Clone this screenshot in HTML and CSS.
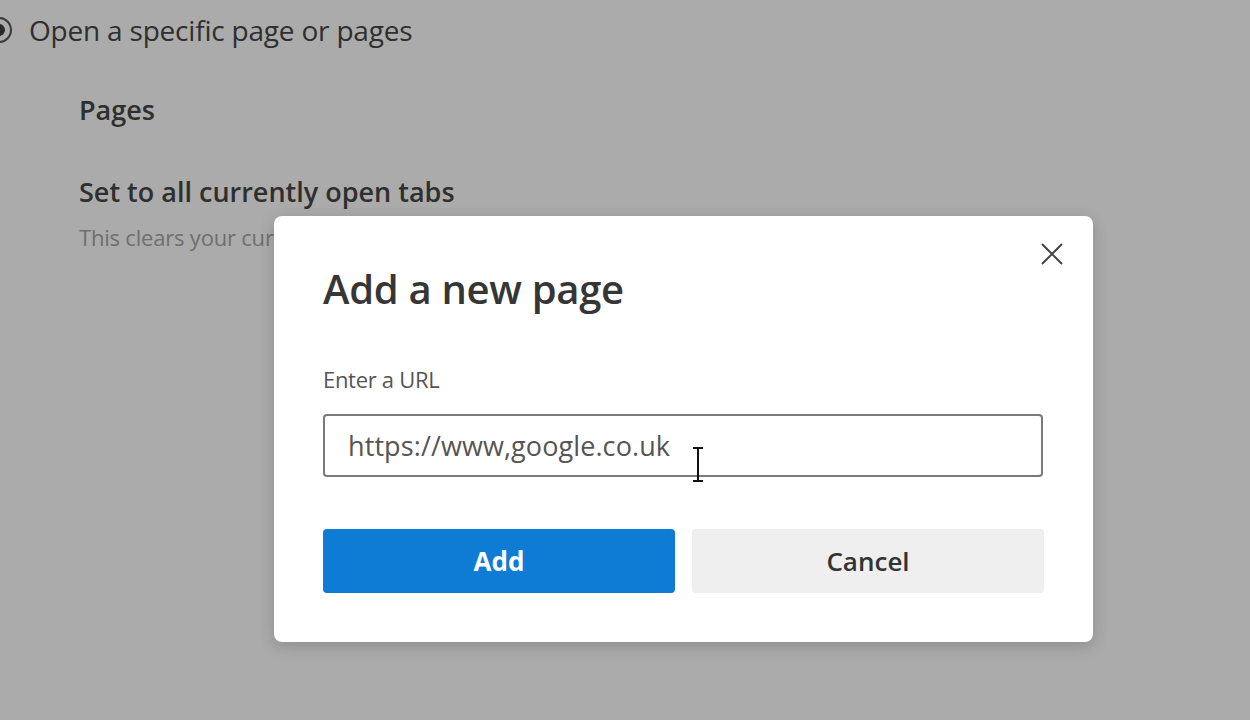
FILE: index.html
```html
<!DOCTYPE html>
<html lang="en">
<head>
  <meta charset="UTF-8">
  <title>Settings - On startup</title>
  <link rel="stylesheet" href="styles.css">
</head>
<body>
  <main class="settings">
    <label class="radio-row">
      <span class="radio"><span class="radio-dot"></span></span>
      <span class="radio-label">Open a specific page or pages</span>
    </label>
    <section class="pages">
      <h2 class="pages-title">Pages</h2>
      <h3 class="row-title">Set to all currently open tabs</h3>
      <p class="row-desc">This clears your current list and replaces it with all currently open tabs</p>
    </section>
  </main>

  <div class="overlay">
    <div class="dialog" role="dialog" aria-labelledby="dialog-title">
      <button class="close" aria-label="Close">
        <svg width="24" height="24" viewBox="0 0 24 24">
          <path d="M2 2 L22 22 M22 2 L2 22" stroke="#444" stroke-width="2" fill="none"/>
        </svg>
      </button>
      <h1 id="dialog-title" class="dialog-title">Add a new page</h1>
      <label class="field-label" for="url">Enter a URL</label>
      <div class="field">
        <input id="url" class="field-input" type="text" value="https://www,google.co.uk">
        <span class="ibeam"></span>
      </div>
      <div class="actions">
        <button class="btn btn-primary">Add</button>
        <button class="btn btn-secondary">Cancel</button>
      </div>
    </div>
  </div>
</body>
</html>
```

FILE: styles.css
```css
* {
  margin: 0;
  padding: 0;
  box-sizing: border-box;
  font-family: "Open Sans", "Noto Sans", sans-serif;
}
body {
  background-color: #ababab;
  width: 1250px;
  height: 720px;
  overflow: hidden;
  position: relative;
}

/* settings page behind the dialog (dimmed) */
.settings {
  padding: 8px 0 0 0;
  color: #2f2f2f;
}
.radio-row {
  display: flex;
  align-items: center;
  gap: 17px;
  margin-left: -14px;
  height: 44px;
}
.radio {
  width: 26px;
  height: 26px;
  border: 2px solid #3a3a3a;
  border-radius: 50%;
  display: flex;
  align-items: center;
  justify-content: center;
}
.radio-dot {
  width: 12px;
  height: 12px;
  border-radius: 50%;
  background: #2a2a2a;
}
.radio-label {
  font-size: 28px;
  letter-spacing: -0.2px;
}
.pages {
  padding-left: 79px;
}
.pages-title {
  font-size: 27px;
  font-weight: 600;
  margin-top: 40px;
  line-height: 36px;
}
.row-title {
  font-size: 27px;
  font-weight: 600;
  margin-top: 46px;
  line-height: 36px;
}
.row-desc {
  font-size: 22px;
  color: #6f6f6f;
  margin-top: 12px;
  letter-spacing: -0.2px;
  white-space: nowrap;
}

/* modal */
.overlay {
  position: absolute;
  inset: 0;
}
.dialog {
  position: absolute;
  left: 274px;
  top: 216px;
  width: 819px;
  height: 426px;
  background: #fff;
  border-radius: 8px;
  box-shadow: 0 4px 16px rgba(0, 0, 0, 0.18);
  padding: 50px 49px 0 49px;
  display: flex;
  flex-direction: column;
}
.close {
  position: absolute;
  right: 29px;
  top: 26px;
  width: 24px;
  height: 24px;
  border: none;
  background: none;
}
.dialog-title {
  font-size: 40px;
  font-weight: 600;
  color: #363636;
  letter-spacing: -0.3px;
  line-height: 46px;
}
.field-label {
  margin-top: 53px;
  font-size: 22px;
  color: #555;
  line-height: 28px;
  letter-spacing: -0.3px;
}
.field {
  position: relative;
  margin-top: 21px;
}
.field-input {
  width: 720px;
  height: 63px;
  border: 2px solid #7a7a7a;
  border-radius: 4px;
  padding: 0 23px;
  font-size: 27px;
  color: #555;
  outline: none;
  letter-spacing: 0.1px;
}
.ibeam {
  position: absolute;
  left: 370px;
  top: 33px;
  width: 10px;
  height: 35px;
  border-top: 2px solid #111;
  border-bottom: 2px solid #111;
}
.ibeam::after {
  content: "";
  position: absolute;
  left: 4px;
  top: 0;
  width: 2px;
  height: 31px;
  background: #111;
}
.actions {
  display: flex;
  gap: 17px;
  margin-top: 52px;
}
.btn {
  width: 352px;
  height: 64px;
  border: none;
  border-radius: 4px;
  font-size: 26px;
  font-weight: 600;
}
.btn-primary {
  background: #0e7bd4;
  color: #fff;
  font-weight: 700;
}
.btn-secondary {
  background: #efefef;
  color: #333;
}
```
